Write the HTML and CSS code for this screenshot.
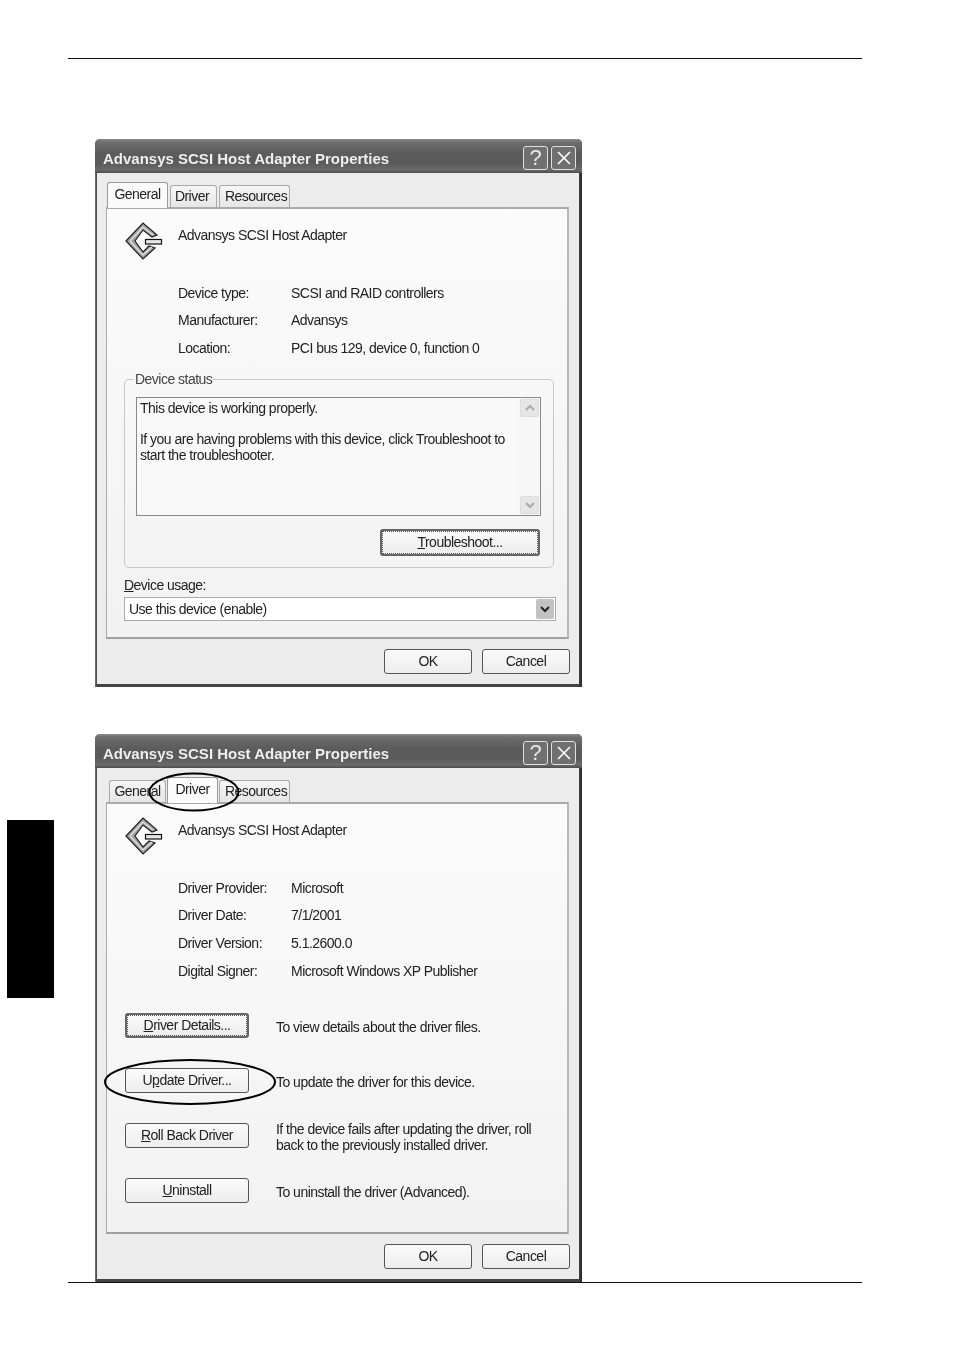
FILE: index.html
```html
<!DOCTYPE html>
<html lang="en">
<head>
<meta charset="utf-8">
<title>Advansys SCSI Host Adapter Properties</title>
<link rel="stylesheet" href="styles.css">
</head>
<body>
<div class="page">
  <hr class="rule rule-top">
  <div class="side-tab"></div>

  <section class="window window-general">
    <header class="titlebar">
      <span class="title">Advansys SCSI Host Adapter Properties</span>
      <span class="tb-btn">?</span>
      <span class="tb-btn"><svg viewBox="0 0 16 16" width="16" height="16"><path d="M2 2L14 14M14 2L2 14" stroke="#fff" stroke-width="1.6" fill="none"/></svg></span>
    </header>
    <div class="client">
      <div class="tabs">
        <span class="tab tab-active tab-general">General</span>
        <span class="tab tab-driver">Driver</span>
        <span class="tab tab-res">Resources</span>
      </div>
      <div class="panel">
        <div class="devhead">
          <svg class="devicon" viewBox="0 0 38 38" width="38" height="38"><path d="M1 19L18 1L32 13L27 15L18 8L10 19L18 30L24 24L30 26L18 37Z" fill="#a0a0a0" stroke="#222" stroke-width="1.2"/><path d="M5 19L18 5L28 13M5 19L18 33L27 25" fill="none" stroke="#e4e4e4" stroke-width="1.2"/><rect x="20.5" y="17.5" width="16" height="4.5" fill="#e8e8e8" stroke="#111" stroke-width="1.2"/></svg>
          <span class="devname">Advansys SCSI Host Adapter</span>
        </div>
        <dl class="props">
          <dt>Device type:</dt><dd>SCSI and RAID controllers</dd>
          <dt>Manufacturer:</dt><dd>Advansys</dd>
          <dt>Location:</dt><dd>PCI bus 129, device 0, function 0</dd>
        </dl>
        <fieldset class="group">
          <legend>Device status</legend>
          <div class="statusbox">
            <div class="statustext">This device is working properly.<br><br>If you are having problems with this device, click Troubleshoot to start the troubleshooter.</div>
            <div class="scroll">
              <span class="sbtn"><svg viewBox="0 0 10 8" width="10" height="8"><path d="M1 6L5 2L9 6" fill="none" stroke="#aaa" stroke-width="2"/></svg></span>
              <span class="sbtn"><svg viewBox="0 0 10 8" width="10" height="8"><path d="M1 2L5 6L9 2" fill="none" stroke="#aaa" stroke-width="2"/></svg></span>
            </div>
          </div>
          <div class="group-actions"><button class="btn btn-default btn-trouble"><u>T</u>roubleshoot...</button></div>
        </fieldset>
        <div class="usage-label"><u>D</u>evice usage:</div>
        <div class="combo"><span>Use this device (enable)</span><span class="combo-arrow"><svg viewBox="0 0 10 8" width="10" height="8"><path d="M1 2L5 6L9 2" fill="none" stroke="#222" stroke-width="2"/></svg></span></div>
      </div>
      <div class="actions"><button class="btn btn-ok">OK</button><button class="btn btn-ok">Cancel</button></div>
    </div>
  </section>

  <section class="window window-driver">
    <header class="titlebar">
      <span class="title">Advansys SCSI Host Adapter Properties</span>
      <span class="tb-btn">?</span>
      <span class="tb-btn"><svg viewBox="0 0 16 16" width="16" height="16"><path d="M2 2L14 14M14 2L2 14" stroke="#fff" stroke-width="1.6" fill="none"/></svg></span>
    </header>
    <div class="client">
      <div class="tabs">
        <span class="tab tab-general">General</span>
        <span class="tab tab-active tab-driver">Driver</span>
        <span class="tab tab-res">Resources</span>
      </div>
      <div class="panel">
        <div class="devhead">
          <svg class="devicon" viewBox="0 0 38 38" width="38" height="38"><path d="M1 19L18 1L32 13L27 15L18 8L10 19L18 30L24 24L30 26L18 37Z" fill="#a0a0a0" stroke="#222" stroke-width="1.2"/><path d="M5 19L18 5L28 13M5 19L18 33L27 25" fill="none" stroke="#e4e4e4" stroke-width="1.2"/><rect x="20.5" y="17.5" width="16" height="4.5" fill="#e8e8e8" stroke="#111" stroke-width="1.2"/></svg>
          <span class="devname">Advansys SCSI Host Adapter</span>
        </div>
        <dl class="props">
          <dt>Driver Provider:</dt><dd>Microsoft</dd>
          <dt>Driver Date:</dt><dd>7/1/2001</dd>
          <dt>Driver Version:</dt><dd>5.1.2600.0</dd>
          <dt>Digital Signer:</dt><dd>Microsoft Windows XP Publisher</dd>
        </dl>
        <div class="drv-actions">
          <div class="drv-row"><button class="btn btn-default btn-drv"><u>D</u>river Details...</button><p>To view details about the driver files.</p></div>
          <div class="drv-row"><button class="btn btn-drv">U<u>p</u>date Driver...</button><p>To update the driver for this device.</p></div>
          <div class="drv-row"><button class="btn btn-drv"><u>R</u>oll Back Driver</button><p>If the device fails after updating the driver, roll back to the previously installed driver.</p></div>
          <div class="drv-row"><button class="btn btn-drv"><u>U</u>ninstall</button><p>To uninstall the driver (Advanced).</p></div>
        </div>
      </div>
      <div class="actions"><button class="btn btn-ok">OK</button><button class="btn btn-ok">Cancel</button></div>
    </div>
  </section>

  <svg class="mark mark-tab" viewBox="0 0 92 40" width="92" height="40"><ellipse cx="46" cy="20" rx="44.5" ry="18.5" fill="none" stroke="#000" stroke-width="2"/></svg>
  <svg class="mark mark-update" viewBox="0 0 172 46" width="172" height="46"><ellipse cx="86" cy="23" rx="85" ry="22" fill="none" stroke="#000" stroke-width="2"/></svg>
  <hr class="rule rule-bottom">
</div>
</body>
</html>
```
FILE: styles.css
```css
* { box-sizing: border-box; }
html, body { margin: 0; padding: 0; background: #fff; }
.page {
  position: relative;
  width: 954px;
  height: 1351px;
  padding: 58px 92px 0 95px;
  overflow: hidden;
  font-family: "Liberation Sans", Arial, sans-serif;
  font-size: 14px;
  letter-spacing: -0.52px;
  color: #222;
}
.rule { border: 0; height: 1px; background: #111; margin: 0; width: 794px; }
.rule-top { margin-left: -27px; }
.rule-bottom { position: absolute; left: 68px; top: 1282px; }
.side-tab { position: absolute; left: 7px; top: 820px; width: 47px; height: 178px; background: #000; }
.window {
  width: 487px;
  height: 548px;
  display: flex;
  flex-direction: column;
  background: linear-gradient(90deg, #777 0, #444 2px, #444 484px, #222 487px);
  border-radius: 5px 5px 0 0;
  filter: blur(0.4px);
}
.window-general { margin-top: 80px; }
.window-driver { margin-top: 47px; }
.titlebar {
  flex: 0 0 34px;
  display: flex;
  gap: 3px;
  padding: 7px 6px 3px 8px;
  border-radius: 5px 5px 0 0;
  background: linear-gradient(#8c8c8c 0, #6e6e6e 3px, #5c5c5c 14px, #5a5a5a 24px, #6a6a6a 31px, #4c4c4c 34px);
}
.title {
  flex: 1;
  align-self: center;
  font-weight: bold;
  font-size: 15px;
  letter-spacing: 0;
  color: #eee;
  white-space: nowrap;
}
.tb-btn {
  width: 25px;
  height: 24px;
  display: flex;
  align-items: center;
  justify-content: center;
  border: 1px solid #e0e0e0;
  border-radius: 3px;
  background: #707070;
  color: #e8e8e8;
  font-size: 22px;
  letter-spacing: 0;
}
.client {
  flex: 1;
  display: flex;
  flex-direction: column;
  margin: 0 3px 3px 2px;
  padding: 12px 10px 0 9px;
  background: #ececec;
  min-height: 0;
}
.tabs { display: flex; align-items: flex-end; height: 22px; padding-left: 3px; gap: 2px; }
.tab {
  height: 22px;
  line-height: 21px;
  padding: 0;
  border: 1px solid #a8a8a8;
  border-bottom: 0;
  border-radius: 3px 3px 0 0;
  background: linear-gradient(#f6f6f6, #e6e6e6);
  text-align: center;
  white-space: nowrap;
}
.tab-general { width: 57px; margin-right: 2px; }
.tab-driver { width: 47px; padding-right: 3px; }
.tab-res { width: 71px; padding-left: 3px; }
.tab-active {
  position: relative;
  z-index: 1;
  height: 26px;
  line-height: 23px;
  margin-bottom: -1px;
  background: #fbfbfb;
  border-color: #999;
  padding-bottom: 3px;
}
.tab-active.tab-general { width: 61px; margin-left: -2px; margin-right: 0; }
.tab-active.tab-driver { width: 51px; margin-left: -3px; margin-right: -1px; padding-right: 0; }
.panel {
  flex: 0 0 432px;
  display: flex;
  flex-direction: column;
  padding: 0 11px 0 17px;
  background: linear-gradient(#fbfbfb, #f2f2f2);
  border-style: solid;
  border-width: 2px 2px 2px 1px;
  border-color: #aaa #b8b8b8 #a0a0a0 #aaa;
}
.devhead { display: flex; align-items: flex-start; height: 70px; padding-top: 13px; }
.devicon { margin: 0 0 0 1px; flex: none; }
.devname { margin: 5px 0 0 15px; }
.props {
  display: grid;
  grid-template-columns: 113px 1fr;
  grid-auto-rows: 27.8px;
  margin: -0.3px 0 0 54px;
  align-items: center;
}
.props dt, .props dd { margin: 0; white-space: nowrap; }
.group {
  margin: 9px 0 0 0;
  padding: 10px 12px 0 11px;
  height: 197px;
  width: 430px;
  min-width: 0;
  border: 1px solid #c8c8c8;
  border-radius: 5px;
}
.group legend { padding: 0 1px; margin-left: -2px; color: #444; }
.statusbox {
  display: flex;
  height: 119px;
  border: 1px solid #888;
  background: #f9f9f9;
}
.statustext { flex: 1; padding: 3px 8px 0 3px; line-height: 15.5px; }
.scroll { width: 21px; flex: none; display: flex; flex-direction: column; justify-content: space-between; padding: 1px; background: #f7f7f7; }
.sbtn { height: 18px; display: flex; align-items: center; justify-content: center; background: #e6e6e6; border: 1px solid #ddd; border-radius: 2px; }
.group-actions { display: flex; justify-content: flex-end; margin-top: 13px; }
.btn {
  font: inherit;
  letter-spacing: inherit;
  color: #222;
  height: 25px;
  padding: 0 0 2px;
  background: linear-gradient(#fafafa, #ededed);
  border: 1px solid #555;
  border-radius: 3px;
  white-space: nowrap;
}
.btn-default { border: 2px solid #666; outline: 1px dotted #555; outline-offset: -3px; }
.btn-trouble { width: 160px; height: 27px; margin-right: 1px; }
.usage-label { margin-top: 8px; line-height: 18px; }
.combo {
  width: 432px;
  height: 24px;
  margin-top: 3px;
  display: flex;
  justify-content: space-between;
  align-items: center;
  padding: 0 1px 0 4px;
  background: #fff;
  border: 1px solid #aaa;
}
.combo-arrow { width: 18px; height: 20px; display: flex; align-items: center; justify-content: center; background: #c2c2c2; border-radius: 2px; }
.actions { display: flex; justify-content: flex-end; gap: 10px; margin: 10px -1px 0 0; }
.btn-ok { width: 88px; }
.drv-actions { display: flex; flex-direction: column; margin-top: 26px; }
.drv-row { display: flex; align-items: center; gap: 27px; height: 30px; margin-bottom: 25px; margin-left: 1px; }
.btn-drv { width: 124px; flex: none; }
.drv-row p { margin: 3px 0 0; line-height: 16px; width: 270px; }
.mark { position: absolute; }
.mark-tab { left: 148px; top: 772px; }
.mark-update { left: 104px; top: 1059px; }
```
